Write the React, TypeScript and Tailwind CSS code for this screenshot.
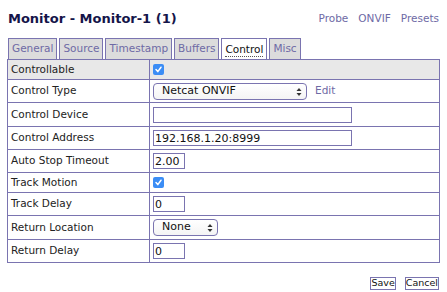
import React from "react";

function Check() {
  return (
    <span className="inline-flex h-[11px] w-[11px] items-center justify-center rounded-[2px] bg-[#3b8df5]">
      <svg width="9" height="9" viewBox="0 0 9 9">
        <path d="M2 4.6 L3.8 6.6 L7 2.2" fill="none" stroke="white" strokeWidth="1.5" strokeLinecap="round" strokeLinejoin="round" />
      </svg>
    </span>
  );
}

function SelectBox({ w, label }: { w: string; label: string }) {
  return (
    <span className={`relative inline-flex h-[17px] ${w} items-center rounded-[4px] border border-[#7a74b0] bg-gradient-to-b from-white to-[#f4f4f4] pl-[8px] text-[11px] text-[#111]`}>
      {label}
      <svg className="absolute right-[4px] top-[3px]" width="6" height="10" viewBox="0 0 6 10">
        <path d="M0.5 4 L3 1 L5.5 4 Z" fill="#333" />
        <path d="M0.5 6 L3 9 L5.5 6 Z" fill="#333" />
      </svg>
    </span>
  );
}

function Input({ w, value }: { w: string; value?: string }) {
  return (
    <span className={`inline-flex h-[16px] ${w} items-center border border-[#7a74b0] bg-white pl-[1px] text-[11px] leading-none text-[#111]`}>
      {value}
    </span>
  );
}

const rows: { label: string; h: string; bg?: string; content: React.ReactNode }[] = [
  { label: "Controllable", h: "h-[20px]", bg: "bg-[#e8e8e8]", content: <Check /> },
  {
    label: "Control Type",
    h: "h-[23px]",
    content: (
      <span className="flex items-center gap-[8px]">
        <SelectBox w="w-[154px]" label="Netcat ONVIF" />
        <span className="text-[10.5px] text-[#6e6aa5]">Edit</span>
      </span>
    ),
  },
  { label: "Control Device", h: "h-[24px]", content: <Input w="w-[199px]" /> },
  { label: "Control Address", h: "h-[23px]", content: <Input w="w-[199px]" value="192.168.1.20:8999" /> },
  { label: "Auto Stop Timeout", h: "h-[23px]", content: <Input w="w-[32px]" value="2.00" /> },
  { label: "Track Motion", h: "h-[20px]", content: <Check /> },
  { label: "Track Delay", h: "h-[23px]", content: <Input w="w-[32px]" value="0" /> },
  { label: "Return Location", h: "h-[24px]", content: <SelectBox w="w-[65px]" label="None" /> },
  { label: "Return Delay", h: "h-[23px]", content: <Input w="w-[32px]" value="0" /> },
];

export default function App() {
  const tabs = ["General", "Source", "Timestamp", "Buffers", "Control", "Misc"];
  return (
    <div className="h-[292px] w-[447px] bg-white px-[7px] text-[10.5px] text-[#222]" style={{ fontFamily: '"DejaVu Sans", Verdana, sans-serif' }}>
      <div className="flex h-[38px] items-center justify-between pl-[1px] pr-[1px]">
        <span className="text-[13px] font-bold text-[#15154a]">Monitor - Monitor-1 (1)</span>
        <span className="flex gap-[10px] text-[10.5px] text-[#6e6aa5]">
          <span>Probe</span>
          <span>ONVIF</span>
          <span>Presets</span>
        </span>
      </div>
      <div className="flex h-[21px] gap-[2px] pl-[1px]">
        {tabs.map((t) => (
          <div
            key={t}
            className={`flex h-[21px] items-center border border-b-0 border-[#7a74b0] px-[3px] text-[10.5px] ${
              t === "Control" ? "bg-white text-[#111]" : "bg-[#dcdcdc] text-[#6e6aa5]"
            }`}
          >
            <span className={t === "Control" ? "border-b border-dotted border-[#555] leading-[14px]" : ""}>{t}</span>
          </div>
        ))}
      </div>
      <table className="w-[433px] border-collapse">
        <tbody>
          {rows.map((r) => (
            <tr key={r.label} className={`${r.h} ${r.bg ?? "bg-white"}`}>
              <td className="w-[142px] border border-[#7a74b0] pl-[3px] align-middle text-[10.5px]">{r.label}</td>
              <td className="border border-[#7a74b0] pl-[3px] align-middle">
                <div className="flex items-center">{r.content}</div>
              </td>
            </tr>
          ))}
        </tbody>
      </table>
      <div className="mt-[14px] flex justify-end gap-[9px] pr-[1px]">
        <span className="flex h-[13px] items-center border border-[#7a74b0] px-0 text-[9.5px] text-[#111]">Save</span>
        <span className="flex h-[13px] items-center border border-[#7a74b0] px-0 text-[9.5px] text-[#111]">Cancel</span>
      </div>
    </div>
  );
}
